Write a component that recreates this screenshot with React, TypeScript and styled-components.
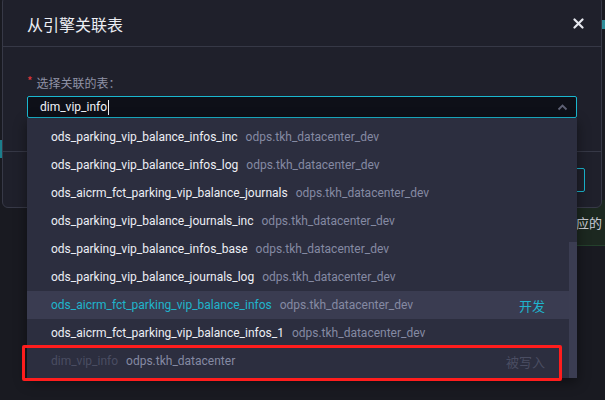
import React from "react";
import styled, { createGlobalStyle } from "styled-components";

const GlobalStyle = createGlobalStyle`
  html, body { margin: 0; padding: 0; background: #191a21; }
  body { font-family: Roboto, "Noto Sans CJK SC", "Noto Sans", sans-serif; }
  * { box-sizing: border-box; }
`;

const Stage = styled.div`
  position: relative;
  width: 605px;
  height: 400px;
  overflow: hidden;
  background: #191a21;
`;

/* page content behind the dialog */
const BackPage = styled.div`
  display: flex;
  flex-direction: column;
  padding-top: 200px;
`;

const NoticeBar = styled.div`
  margin-left: 300px;
  height: 46px;
  background: #1c2820;
  border-bottom: 1px solid #24402c;
  display: flex;
  align-items: center;
  padding-left: 250px;
  color: #c9ccd6;
  font-size: 13px;
  font-family: "Noto Sans CJK SC", sans-serif;
  white-space: nowrap;
  overflow: hidden;
`;

const EdgeMark = styled.div<{ $top: number }>`
  position: absolute;
  top: ${(p) => p.$top}px;
  right: 0;
  width: 3px;
  height: 9px;
  background: #2f8d9a;
`;

const LeftMark = styled.div`
  position: absolute;
  top: 140px;
  left: 0;
  width: 2px;
  height: 18px;
  background: #1b7e8c;
`;

const Modal = styled.div`
  position: absolute;
  left: 2px;
  top: -4px;
  width: 600px;
  height: 212px;
  background: #1f202b;
  border: 1px solid #373947;
  border-radius: 6px;
  display: flex;
  flex-direction: column;
`;

const Header = styled.div`
  height: 50px;
  flex: none;
  display: flex;
  align-items: center;
  justify-content: space-between;
  padding: 4px 17px 0 24px;
  border-bottom: 1px solid #363846;
`;

const Title = styled.div`
  color: #eceef4;
  font-size: 16px;
  font-family: "Noto Sans CJK SC", sans-serif;
`;

const CloseBtn = styled.div`
  width: 12px;
  height: 12px;
  display: flex;
  align-items: center;
  justify-content: center;
`;

const Body = styled.div`
  padding: 25px 24px 33px 24px;
  border-bottom: 1px solid #363846;
`;

const Label = styled.div`
  height: 20px;
  display: flex;
  align-items: center;
  gap: 4px;
  color: #8f92a6;
  font-size: 12px;
  font-family: "Noto Sans CJK SC", sans-serif;
  margin-bottom: 4px;
`;

const Star = styled.span`
  color: #e2373a;
  font-size: 12px;
  margin-top: -3px;
`;

const Input = styled.div`
  height: 22px;
  border: 1px solid #1ab7cf;
  border-radius: 2px;
  background: #0e1018;
  display: flex;
  align-items: center;
  padding: 0 8px 0 12px;
  color: #f0f2f7;
  font-size: 12px;
`;

const Caret = styled.span`
  display: inline-block;
  width: 1px;
  height: 15px;
  background: #f0f2f7;
  margin-left: 1px;
`;

const InputText = styled.span`
  flex: 1;
  display: flex;
  align-items: center;
`;

const Footer = styled.div`
  flex: 1;
  display: flex;
  justify-content: flex-end;
  align-items: flex-start;
  gap: 8px;
  padding: 16px 16px 0 0;
`;

const Button = styled.div<{ $primary?: boolean }>`
  height: 24px;
  padding: 0 14px;
  border: 1px solid ${(p) => (p.$primary ? "#1ab7cf" : "#474a5c")};
  border-radius: 2px;
  color: ${(p) => (p.$primary ? "#1ab7cf" : "#c8cad6")};
  font-size: 12px;
  display: flex;
  align-items: center;
  font-family: "Noto Sans CJK SC", sans-serif;
`;

const Dropdown = styled.div`
  position: absolute;
  left: 27px;
  top: 118px;
  width: 550px;
  height: 260px;
  background: #2c2e3f;
  overflow: hidden;
  box-shadow: 0 4px 12px rgba(0, 0, 0, 0.45);
`;

const List = styled.div`
  padding-top: 5px;
  width: calc(100% - 8px);
  display: flex;
  flex-direction: column;
`;

const Row = styled.div<{ $active?: boolean }>`
  height: 28px;
  display: flex;
  align-items: center;
  gap: 8px;
  padding: 0 24px;
  font-size: 12px;
  white-space: nowrap;
  background: ${(p) => (p.$active ? "#3a3c51" : "transparent")};
`;

const Name = styled.span<{ $state?: "active" | "disabled" }>`
  color: ${(p) =>
    p.$state === "active" ? "#1fb4cc" : p.$state === "disabled" ? "#4a4d62" : "#eceef5"};
`;

const Db = styled.span`
  color: #858aa3;
`;

const Tag = styled.span<{ $state?: "active" | "disabled" }>`
  margin-left: auto;
  font-size: 13px;
  font-family: "Noto Sans CJK SC", sans-serif;
  color: ${(p) => (p.$state === "active" ? "#1fb4cc" : "#4a4d62")};
`;

const ScrollThumb = styled.div`
  position: absolute;
  right: 0;
  top: 124px;
  width: 8px;
  height: 136px;
  background: #3b3d52;
`;

const Annotation = styled.div`
  position: absolute;
  left: 22px;
  top: 345px;
  width: 540px;
  height: 36px;
  border: 3px solid #ff1d1d;
  border-radius: 2px;
  pointer-events: none;
`;

type Item = {
  name: string;
  db: string;
  tag?: string;
  state?: "active" | "disabled";
};

const items: Item[] = [
  { name: "ods_parking_vip_balance_infos_inc", db: "odps.tkh_datacenter_dev" },
  { name: "ods_parking_vip_balance_infos_log", db: "odps.tkh_datacenter_dev" },
  { name: "ods_aicrm_fct_parking_vip_balance_journals", db: "odps.tkh_datacenter_dev" },
  { name: "ods_parking_vip_balance_journals_inc", db: "odps.tkh_datacenter_dev" },
  { name: "ods_parking_vip_balance_infos_base", db: "odps.tkh_datacenter_dev" },
  { name: "ods_parking_vip_balance_journals_log", db: "odps.tkh_datacenter_dev" },
  {
    name: "ods_aicrm_fct_parking_vip_balance_infos",
    db: "odps.tkh_datacenter_dev",
    tag: "开发",
    state: "active",
  },
  { name: "ods_aicrm_fct_parking_vip_balance_infos_1", db: "odps.tkh_datacenter_dev" },
  { name: "dim_vip_info", db: "odps.tkh_datacenter", tag: "被写入", state: "disabled" },
];

export default function App() {
  return (
    <>
      <GlobalStyle />
      <Stage>
        <BackPage>
          <NoticeBar>相对应的</NoticeBar>
        </BackPage>
        <EdgeMark $top={20} />
        <LeftMark />
        <Modal>
          <Header>
            <Title>从引擎关联表</Title>
            <CloseBtn>
              <svg width="11" height="11" viewBox="0 0 11 11">
                <path d="M1.5 1.5 L9.5 9.5 M9.5 1.5 L1.5 9.5" stroke="#e6e8ef" strokeWidth="2.2" strokeLinecap="round" />
              </svg>
            </CloseBtn>
          </Header>
          <Body>
            <Label>
              <Star>*</Star>
              选择关联的表：
            </Label>
            <Input>
              <InputText>
                dim_vip_info
                <Caret />
              </InputText>
              <svg width="11" height="7" viewBox="0 0 11 7">
                <path d="M1.5 5.5 L5.5 1.5 L9.5 5.5" stroke="#5f6276" strokeWidth="1.8" fill="none" />
              </svg>
            </Input>
          </Body>
          <Footer>
            <Button>取消</Button>
            <Button $primary>确定</Button>
          </Footer>
        </Modal>
        <Dropdown>
          <List>
            {items.map((it) => (
              <Row key={it.name + it.db} $active={it.state === "active"}>
                <Name $state={it.state}>{it.name}</Name>
                <Db>{it.db}</Db>
                {it.tag && <Tag $state={it.state}>{it.tag}</Tag>}
              </Row>
            ))}
          </List>
          <ScrollThumb />
        </Dropdown>
        <Annotation />
      </Stage>
    </>
  );
}
